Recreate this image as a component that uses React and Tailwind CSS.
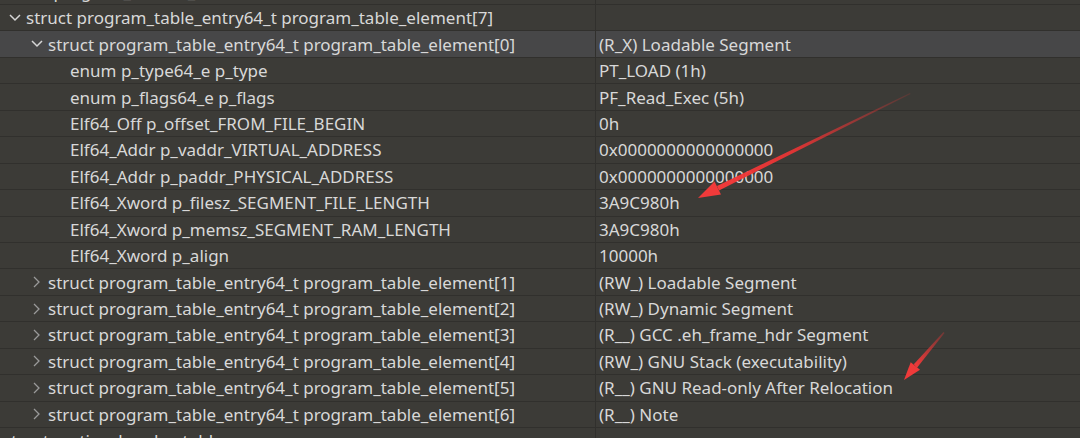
import React from "react";

const rows = [
  { lvl: -1, name: "struct program_header_table", value: "" },
  { lvl: 0, open: true, name: "struct program_table_entry64_t program_table_element[7]", value: "" },
  { lvl: 1, open: true, hl: true, name: "struct program_table_entry64_t program_table_element[0]", value: "(R_X) Loadable Segment" },
  { lvl: 2, name: "enum p_type64_e p_type", value: "PT_LOAD (1h)" },
  { lvl: 2, name: "enum p_flags64_e p_flags", value: "PF_Read_Exec (5h)" },
  { lvl: 2, name: "Elf64_Off p_offset_FROM_FILE_BEGIN", value: "0h" },
  { lvl: 2, name: "Elf64_Addr p_vaddr_VIRTUAL_ADDRESS", value: "0x0000000000000000" },
  { lvl: 2, name: "Elf64_Addr p_paddr_PHYSICAL_ADDRESS", value: "0x0000000000000000" },
  { lvl: 2, name: "Elf64_Xword p_filesz_SEGMENT_FILE_LENGTH", value: "3A9C980h" },
  { lvl: 2, name: "Elf64_Xword p_memsz_SEGMENT_RAM_LENGTH", value: "3A9C980h" },
  { lvl: 2, name: "Elf64_Xword p_align", value: "10000h" },
  { lvl: 1, name: "struct program_table_entry64_t program_table_element[1]", value: "(RW_) Loadable Segment" },
  { lvl: 1, name: "struct program_table_entry64_t program_table_element[2]", value: "(RW_) Dynamic Segment" },
  { lvl: 1, name: "struct program_table_entry64_t program_table_element[3]", value: "(R__) GCC .eh_frame_hdr Segment" },
  { lvl: 1, name: "struct program_table_entry64_t program_table_element[4]", value: "(RW_) GNU Stack (executability)" },
  { lvl: 1, name: "struct program_table_entry64_t program_table_element[5]", value: "(R__) GNU Read-only After Relocation" },
  { lvl: 1, name: "struct program_table_entry64_t program_table_element[6]", value: "(R__) Note" },
  { lvl: -1, name: "struct section_header_table", value: "" },
];

const padFor = {
  "-1": "pl-[3px]",
  "0": "pl-[4px]",
  "1": "pl-[26px]",
  "2": "pl-[48px]",
};

function Chevron({ open }) {
  return (
    <svg width="22" height="16" viewBox="0 0 22 16" className="shrink-0">
      {open ? (
        <polyline points="6,5 11,10 16,5" fill="none" stroke="#d6d6d6" strokeWidth="1.5" />
      ) : (
        <polyline points="8,3 13,8 8,13" fill="none" stroke="#9a9a9a" strokeWidth="1.3" />
      )}
    </svg>
  );
}

function Row({ r }) {
  return (
    <div
      className={
        "grid grid-cols-[595px_1fr] h-[26.44px] border-b border-[#31302d] " +
        (r.hl ? "bg-[#474748]" : "")
      }
    >
      <div className={"flex items-center whitespace-nowrap overflow-hidden " + padFor[String(r.lvl)]}>
        {r.lvl >= 0 && r.lvl < 2 && <Chevron open={r.open} />}
        {r.lvl === 2 && <span className="w-[22px] shrink-0" />}
        <span>{r.name}</span>
      </div>
      <div className="flex items-center pl-[3px] border-l border-[#31302d] whitespace-nowrap overflow-hidden">
        {r.value}
      </div>
    </div>
  );
}

export default function App() {
  return (
    <div
      className="relative w-[1080px] h-[438px] overflow-hidden bg-[#3c3b37] text-[#d8d8d8] text-[17px] leading-none"
      style={{ fontFamily: '"Noto Sans", "Open Sans", sans-serif' }}
    >
      <div className="mt-[-21.44px]">
        {rows.map((r, i) => (
          <Row key={i} r={r} />
        ))}
      </div>
      <svg className="absolute left-0 top-0 pointer-events-none" width="1080" height="438">
        <defs>
          <linearGradient id="g1" gradientUnits="userSpaceOnUse" x1="910" y1="93" x2="718" y2="188">
            <stop offset="0" stopColor="#e83434" stopOpacity="0.15" />
            <stop offset="0.6" stopColor="#ee3434" stopOpacity="0.9" />
            <stop offset="1" stopColor="#f03a3a" stopOpacity="1" />
          </linearGradient>
          <linearGradient id="g2" gradientUnits="userSpaceOnUse" x1="944" y1="332" x2="915" y2="366">
            <stop offset="0" stopColor="#e83434" stopOpacity="0.3" />
            <stop offset="1" stopColor="#f03a3a" stopOpacity="1" />
          </linearGradient>
        </defs>
        <polygon points="910,93 910.5,94 719,190.5 717,186" fill="url(#g1)" />
        <polygon points="698,198 721,194.5 714.5,181.5" fill="#f03a3a" />
        <polygon points="943.5,332 944.5,333 917,367.8 913.8,364.3" fill="url(#g2)" />
        <polygon points="904,380 920,369.8 910.7,362.2" fill="#f03a3a" />
      </svg>
    </div>
  );
}
